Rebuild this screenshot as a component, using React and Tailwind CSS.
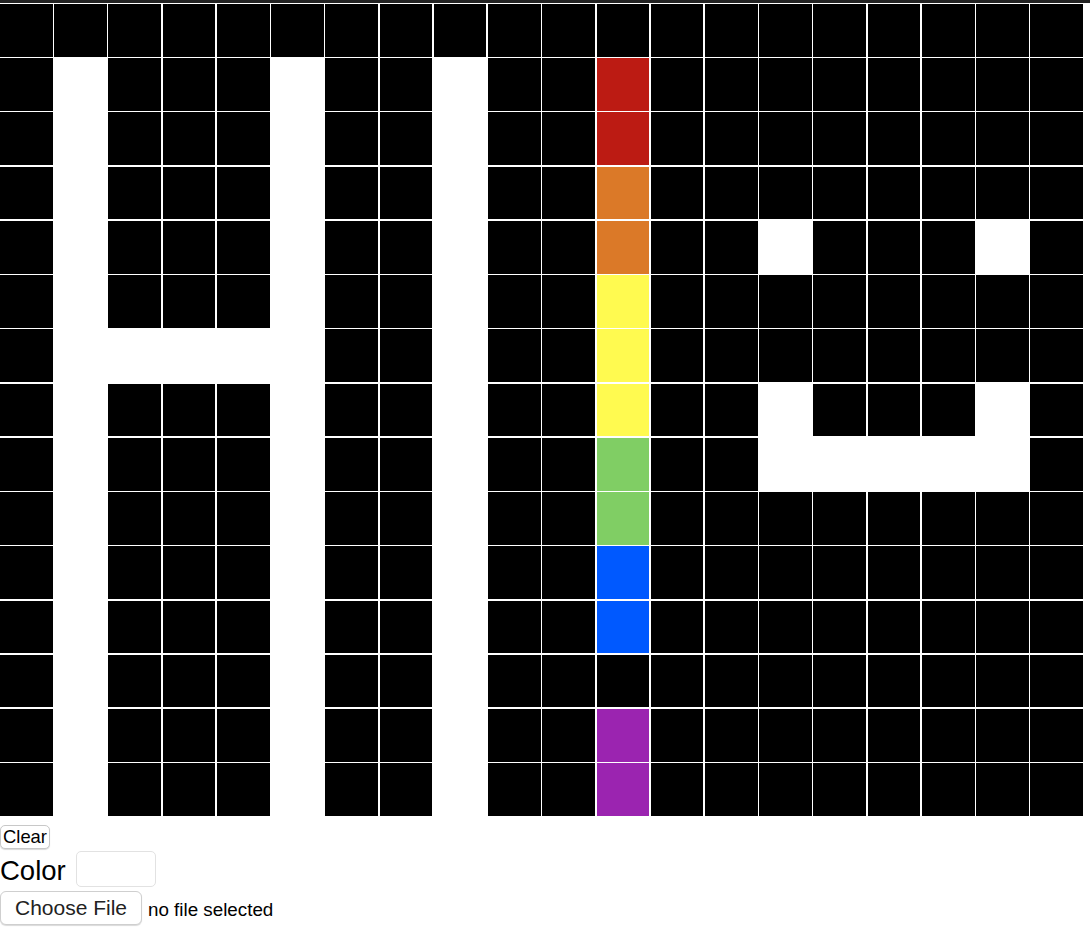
const COLS = 20;
const ROWS = 15;

const RAINBOW = {
  1: '#bc1b13',
  2: '#bc1b13',
  3: '#db7928',
  4: '#db7928',
  5: '#fffa50',
  6: '#fffa50',
  7: '#fffa50',
  8: '#80ce64',
  9: '#80ce64',
  10: '#0059ff',
  11: '#0059ff',
  13: '#9b24b0',
  14: '#9b24b0',
};

// build the painted pixels: "HI", a rainbow stripe and a smiley
const cellColor = (r, c) => {
  if (r === 0) return '#000000';
  // H
  if (c === 1 || c === 5) return '#ffffff';
  if (r === 6 && c >= 2 && c <= 4) return '#ffffff';
  // I
  if (c === 8) return '#ffffff';
  // rainbow
  if (c === 11 && RAINBOW[r]) return RAINBOW[r];
  // smiley
  if (r === 4 && (c === 14 || c === 18)) return '#ffffff';
  if (r === 7 && (c === 14 || c === 18)) return '#ffffff';
  if (r === 8 && c >= 14 && c <= 18) return '#ffffff';
  return '#000000';
};

const cells = [];
for (let r = 0; r < ROWS; r++) {
  for (let c = 0; c < COLS; c++) {
    cells.push({ key: `${r}-${c}`, color: cellColor(r, c) });
  }
}

const App = () => {
  return (
    <div className="min-h-screen bg-white text-black" style={{ fontFamily: '"Liberation Sans", Arial, sans-serif' }}>
      <div className="h-[3px] w-full bg-[#222222]" />
      <div className="w-[1083px] pt-[1px] bg-white">
        <div className="grid grid-cols-[repeat(20,minmax(0,1fr))] gap-[1.6px] bg-white">
          {cells.map((cell) => (
            <div
              key={cell.key}
              className="aspect-square"
              style={{ backgroundColor: cell.color }}
            />
          ))}
        </div>
      </div>

      <div className="mt-[9px] flex flex-col items-start">
        <button className="h-[24px] w-[50px] rounded-[5px] border border-[#c8c8c8] bg-white shadow-[0_1px_1px_rgba(0,0,0,0.15)] text-[18.4px] leading-none text-black">
          Clear
        </button>

        <div className="mt-[2px] flex items-center h-[36px]">
          <span className="text-[27.5px] leading-none mt-[3px]">Color</span>
          <span className="ml-[10px] w-[80px] h-[36px] rounded-[5px] border border-[#e2e2e2] bg-white" />
        </div>

        <div className="mt-[4px] flex items-center">
          <button className="h-[34px] w-[142px] rounded-[6px] border border-[#cfcfcf] bg-white shadow-[0_1px_1px_rgba(0,0,0,0.15)] text-[21px] leading-none text-[#222222]">
            Choose File
          </button>
          <span className="ml-[6px] text-[18.8px] leading-none mt-[4px]">no file selected</span>
        </div>
      </div>
    </div>
  );
};

export default App;
